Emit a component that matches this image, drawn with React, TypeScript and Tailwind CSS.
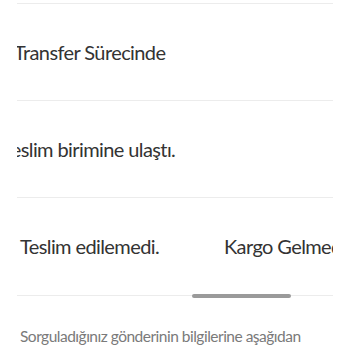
import React from 'react';

const font = { fontFamily: 'Lato, "Open Sans", sans-serif' };

export default function App() {
    return (
        <div className="w-[350px] h-[350px] overflow-hidden bg-white" style={font}>
            <div className="mx-[17px] pt-[3px]">
                <div className="border-t border-[#ececec]" />

                <div className="h-[97px] overflow-hidden flex items-center border-b border-[#ececec]">
                    <span className="ml-[-3px] whitespace-nowrap text-[20px] tracking-[-0.6px] text-[#333]">Transfer Sürecinde</span>
                </div>

                <div className="h-[97px] overflow-hidden flex items-center border-b border-[#ececec]">
                    <span className="ml-[-15px] whitespace-nowrap text-[20px] tracking-[-0.6px] text-[#333]">Teslim birimine ulaştı.</span>
                </div>

                <div className="h-[98px] overflow-hidden border-b border-[#ececec]">
                    <div className="flex pt-[33px] pl-[3px] whitespace-nowrap text-[20px] tracking-[-0.6px] text-[#333]">
                        <span className="w-[204px] shrink-0">Teslim edilemedi.</span>
                        <span className="shrink-0">Kargo Gelmedi</span>
                    </div>
                </div>
                <div className="relative">
                    <div className="absolute left-[175px] top-[-2px] h-[4px] w-[99px] rounded-full bg-[#9a9a9a]" />
                </div>

                <p className="pt-[30px] pl-[3px] text-[15.5px] leading-[21px] tracking-[-0.5px] text-[#7a7a7a]">
                    Sorguladığınız gönderinin bilgilerine aşağıdan ulaşabilirsiniz. Sorgulama sonuçları aşağıda listelenmiştir.
                </p>
            </div>
        </div>
    );
}
